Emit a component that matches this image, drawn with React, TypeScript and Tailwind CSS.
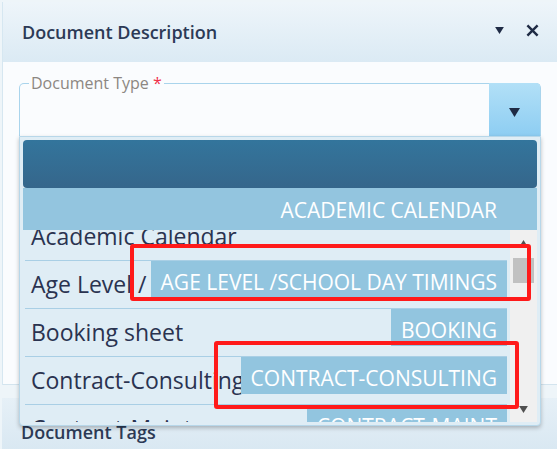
import React from "react";

type Item = { label: string; code: string };

const items: Item[] = [
  { label: "Academic Calendar", code: "" },
  { label: "Age Level / School Day Timings", code: "AGE LEVEL /SCHOOL DAY TIMINGS" },
  { label: "Booking sheet", code: "BOOKING" },
  { label: "Contract-Consulting", code: "CONTRACT-CONSULTING" },
  { label: "Contract-Maintenance", code: "CONTRACT-MAINT" },
];

function Caret({ className }: { className?: string }) {
  return (
    <svg viewBox="0 0 10 8" className={className}>
      <path d="M0 0 L10 0 L5 8 Z" fill="currentColor" />
    </svg>
  );
}

function DropdownList() {
  return (
    <div className="absolute left-[19px] top-[136px] w-[522px] h-[290px] bg-[#dfedf5] border border-[#b7d7e9] rounded-b-[4px] shadow-[0_2px_4px_rgba(0,0,0,0.25)] p-[3px] flex flex-col">
      <div className="h-[48px] shrink-0 rounded-[4px] bg-gradient-to-b from-[#33759c] to-[#35668b]" />
      <div className="h-[42px] shrink-0 bg-[#93c5df] flex items-center justify-end pr-[40px] pt-[4px] text-white text-[21px]">
        ACADEMIC CALENDAR
      </div>
      <div className="relative flex-1 overflow-hidden flex">
        <div className="flex-1 overflow-hidden">
          <div className="-mt-[17px] pl-[2px]">
            {items.map((item) => (
              <div
                key={item.label}
                className="relative h-[48px] border-b border-[#a9cfe5] flex items-center pl-[6px] text-[23px] text-[#2a3350] whitespace-nowrap overflow-hidden"
              >
                {item.label}
                {item.code && (
                  <span className="absolute right-0 top-0 h-[37px] bg-[#92c5df] text-white text-[21px] px-[10px] pt-[9px] leading-[24px]">
                    {item.code}
                  </span>
                )}
              </div>
            ))}
          </div>
        </div>
        {/* scrollbar */}
        <div className="w-[27px] ml-[3px] bg-[#f0f0f0] relative">
          <Caret className="absolute left-[10px] top-[10px] w-[7px] h-[5px] rotate-180 text-[#505050]" />
          <div className="absolute left-[3px] top-[28px] w-[21px] h-[25px] bg-[#c1c1c1]" />
          <Caret className="absolute left-[8px] top-[176px] w-[11px] h-[7px] text-[#505050]" />
        </div>
      </div>
    </div>
  );
}

export default function App() {
  return (
    <div
      className="relative w-[557px] h-[449px] overflow-hidden bg-[#eef5f9]"
      style={{ fontFamily: '"Open Sans", "Noto Sans", sans-serif' }}
    >
      <div className="ml-[2px] mt-[2px] bg-[#fafcfe] border-l border-[#d6e7f1]">
        <div className="h-[60px] bg-gradient-to-b from-[#eef5fa] to-[#dbeaf4] flex items-center pl-[19px] pr-[18px]">
          <div className="flex-1 text-[18px] font-semibold text-[#2c3a56]">Document Description</div>
          <Caret className="w-[9px] h-[7px] text-[#1f2b45] mr-[22px] -mt-[4px]" />
          <svg viewBox="0 0 14 14" className="w-[13px] h-[13px] -mt-[4px] text-[#1f2b45]">
            <path d="M1.5 1.5 L12.5 12.5 M12.5 1.5 L1.5 12.5" stroke="currentColor" strokeWidth="2.6" />
          </svg>
        </div>
        <div className="h-[323px] pt-[12px] pl-[16px] pr-[16px] border-b border-[#d3e4ee]">
          <fieldset className="relative h-[62px] border border-[#a9d4ec] border-b-0 rounded-t-[5px] pl-[9px] flex">
            <legend className="px-[2px] text-[16px] text-[#8c8782] leading-[18px]">
              Document Type <span className="text-[#f0304a]">*</span>
            </legend>
            <div className="flex-1" />
            <div className="-mt-[9px] w-[51px] rounded-tr-[4px] bg-gradient-to-b from-[#b2e0f7] to-[#8dcdf2] flex items-center justify-center pt-[6px]">
              <Caret className="w-[11px] h-[9px] text-[#1f2b45]" />
            </div>
          </fieldset>
        </div>
      </div>
      <div className="ml-[2px] mt-[13px] h-[52px] bg-gradient-to-b from-[#e6f0f7] to-[#d9e8f2] flex items-center pl-[19px] pt-[16px]">
        <div className="text-[18px] font-semibold text-[#2c3a56]">Document Tags</div>
      </div>

      <DropdownList />

      {/* highlight boxes */}
      <div className="absolute left-[130px] top-[244px] w-[401px] h-[57px] border-[4px] border-[#ff1a1a] rounded-[3px]" />
      <div className="absolute left-[214px] top-[341px] w-[305px] h-[68px] border-[4px] border-[#ff1a1a] rounded-[3px]" />
    </div>
  );
}
